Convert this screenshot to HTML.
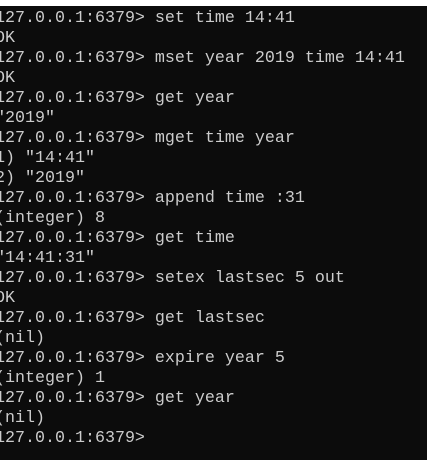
<!DOCTYPE html>
<html><head><style>
html,body{margin:0;padding:0;background:#0c0c0c;width:427px;height:460px;overflow:hidden}
#w{position:absolute;left:0;top:0;width:427px;height:6px;background:#fff}
pre{position:absolute;left:-5px;top:9px;margin:0;font-family:"Liberation Mono",monospace;font-size:16.67px;line-height:20px;color:#cccccc}
</style></head><body><div id="w"></div><pre>127.0.0.1:6379&gt; set time 14:41
OK
127.0.0.1:6379&gt; mset year 2019 time 14:41
OK
127.0.0.1:6379&gt; get year
"2019"
127.0.0.1:6379&gt; mget time year
1) "14:41"
2) "2019"
127.0.0.1:6379&gt; append time :31
(integer) 8
127.0.0.1:6379&gt; get time
"14:41:31"
127.0.0.1:6379&gt; setex lastsec 5 out
OK
127.0.0.1:6379&gt; get lastsec
(nil)
127.0.0.1:6379&gt; expire year 5
(integer) 1
127.0.0.1:6379&gt; get year
(nil)
127.0.0.1:6379&gt;</pre></body></html>
